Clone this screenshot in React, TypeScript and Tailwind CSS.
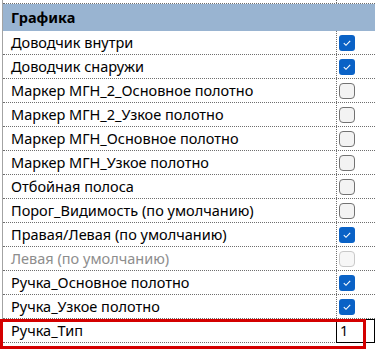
import React from "react"

type Row = {
  name: string
  kind: "on" | "off" | "disabled" | "value"
  value?: string
}

const ROWS: Row[] = [
  { name: "Доводчик внутри", kind: "on" },
  { name: "Доводчик снаружи", kind: "on" },
  { name: "Маркер МГН_2_Основное полотно", kind: "off" },
  { name: "Маркер МГН_2_Узкое полотно", kind: "off" },
  { name: "Маркер МГН_Основное полотно", kind: "off" },
  { name: "Маркер МГН_Узкое полотно", kind: "off" },
  { name: "Отбойная полоса", kind: "off" },
  { name: "Порог_Видимость (по умолчанию)", kind: "off" },
  { name: "Правая/Левая (по умолчанию)", kind: "on" },
  { name: "Левая (по умолчанию)", kind: "disabled" },
  { name: "Ручка_Основное полотно", kind: "on" },
  { name: "Ручка_Узкое полотно", kind: "on" },
  { name: "Ручка_Тип", kind: "value", value: "1" },
]

function Check({ kind }: { kind: Row["kind"] }) {
  if (kind === "on") {
    return (
      <div className="w-[16px] h-[16px] rounded-[3px] bg-[#0a62c6] flex items-center justify-center">
        <svg width="16" height="16" viewBox="0 0 16 16">
          <path d="M4.8 8.2 L7 10.3 L11.2 5.8" fill="none" stroke="white" strokeWidth="1.1" />
        </svg>
      </div>
    )
  }
  if (kind === "disabled") {
    return <div className="w-[16px] h-[16px] rounded-[4px] border border-[#c9c9c9] bg-[#f7f7f7]" />
  }
  return <div className="w-[16px] h-[16px] rounded-[4px] border border-[#727272] bg-[#f3f3f3]" />
}

export default function App() {
  return (
    <div
      className="relative w-[375px] h-[349px] overflow-hidden bg-white text-[14.5px] text-black"
      style={{ fontFamily: '"Noto Sans", "Open Sans", sans-serif' }}
    >
      <div className="ml-[2px] border-l border-[#a3a3a3]">
        {/* row above, cut off */}
        <div className="flex h-[4px] border-b border-dotted border-[#6e6e6e]">
          <div className="w-[333px]" />
          <div className="flex-1 border-l border-dotted border-[#6e6e6e]" />
        </div>

        {/* category header */}
        <div className="h-[27px] bg-[#99b4d1] flex items-center pl-[8px] font-bold">Графика</div>

        {ROWS.map((row) => (
          <div key={row.name} className="flex h-[24px] border-b border-dotted border-[#6e6e6e]">
            <div
              className={`w-[333px] pl-[8px] flex items-center whitespace-nowrap overflow-hidden ${
                row.kind === "disabled" ? "text-[#8d8d8d]" : ""
              }`}
            >
              {row.name}
            </div>
            {row.kind === "value" ? (
              <div className="flex-1 border border-black flex items-center pl-[3px] -mb-[1px]">
                {row.value}
              </div>
            ) : (
              <div className="flex-1 border-l border-dotted border-[#6e6e6e] flex items-center pl-[2px]">
                <Check kind={row.kind} />
              </div>
            )}
          </div>
        ))}
      </div>

      {/* red highlight */}
      <div className="absolute left-0 top-[319px] w-[366px] h-[30px] border-[3px] border-[#d40000]" />
    </div>
  )
}
